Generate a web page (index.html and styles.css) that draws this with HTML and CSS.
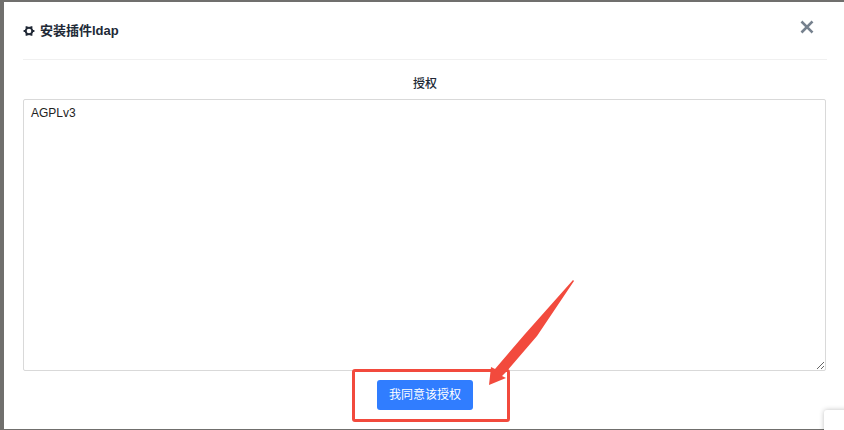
FILE: index.html
```html
<!DOCTYPE html>
<html lang="zh-CN">
<head>
  <meta charset="UTF-8">
  <meta name="viewport" content="width=device-width, initial-scale=1">
  <title>安装插件ldap</title>
  <link rel="stylesheet" href="styles.css">
</head>
<body>
  <div class="modal" role="dialog" aria-labelledby="modalTitle">
    <header class="modal-header">
      <svg class="gear" viewBox="0 0 12 12" aria-hidden="true">
        <circle cx="6" cy="6" r="3.3" fill="none" stroke="currentColor" stroke-width="2"/>
        <path d="M3.6 1.3v2M8.4 1.3v2M3.6 8.7v2M8.4 8.7v2M.6 6h2M9.4 6h2" stroke="currentColor" stroke-width="2"/>
      </svg>
      <h1 id="modalTitle">安装插件ldap</h1>
      <button class="close" type="button" aria-label="关闭">
        <svg viewBox="0 0 14 14" aria-hidden="true">
          <path d="M2.4 2.4l9.2 9.2M11.6 2.4l-9.2 9.2" stroke="currentColor" stroke-width="2.6" stroke-linecap="square"/>
        </svg>
      </button>
    </header>

    <form class="license-form">
      <label for="license">授权</label>
      <textarea id="license" readonly>AGPLv3</textarea>
      <div class="actions">
        <button class="agree" type="button">我同意该授权</button>
        <div class="highlight"></div>
        <svg class="arrow" viewBox="0 0 88 108" aria-hidden="true">
          <path d="M0 107L2 89L6 91L36 56L84 2L85 3L48 58L18 93L13 98L17 100Z" fill="#f24a3d"/>
        </svg>
      </div>
    </form>
  </div>

  <!-- Corner widget -->
  <div class="corner-widget"></div>
</body>
</html>
```

FILE: styles.css
```css
* {
  margin: 0;
  padding: 0;
  box-sizing: border-box;
}

body {
  min-height: 100vh;
  display: flex;
  padding: 2px 0 1px 4px;
  overflow: hidden;
  background: #706f6d;
  color: #212936;
  font-family: "Liberation Sans", "Noto Sans CJK SC", sans-serif;
  font-size: 13px;
}

/* Modal */
.modal {
  flex: 1;
  display: flex;
  flex-direction: column;
  padding: 0 17px 19px 19px;
  background: #fff;
}

.modal-header {
  display: flex;
  align-items: center;
  height: 58px;
  border-bottom: 1px solid #f0f0f0;
}

.gear {
  width: 12px;
  height: 12px;
  margin-right: 5px;
}

.modal-header h1 {
  font-size: 13px;
  line-height: 20px;
  font-weight: bold;
}

.close {
  width: 14px;
  height: 14px;
  margin: 0 13px 8px auto;
  border: none;
  background: none;
  color: #76818e;
  cursor: pointer;
}

.close svg {
  display: block;
}

/* License form */
.license-form {
  flex: 1;
  display: flex;
  flex-direction: column;
}

.license-form label {
  padding: 14px 0 5px;
  line-height: 20px;
  font-size: 12px;
  font-weight: 500;
  text-align: center;
}

.license-form textarea {
  flex: 1;
  margin-right: 1px;
  padding: 5px 7px;
  border: 1px solid #d9d9d9;
  border-radius: 2px;
  background: #fff;
  color: #222;
  font-family: inherit;
  font-size: 12px;
  line-height: 16px;
  outline: none;
  resize: vertical;
}

.actions {
  position: relative;
  align-self: center;
  margin-top: 9px;
}

.agree {
  display: block;
  height: 30px;
  padding: 0 12px;
  border: none;
  border-radius: 3px;
  background: #307dff;
  color: #fff;
  font-family: inherit;
  font-size: 12px;
  line-height: 30px;
  cursor: pointer;
}

/* Marker drawn over the button */
.highlight {
  position: absolute;
  inset: -11px -37px -12px -25px;
  border: 3px solid #f24a3d;
  border-radius: 3px;
  pointer-events: none;
}

.arrow {
  position: absolute;
  left: 112px;
  bottom: 24px;
  width: 88px;
  height: 108px;
  pointer-events: none;
}

/* Corner widget */
.corner-widget {
  position: fixed;
  right: -10px;
  bottom: -10px;
  width: 30px;
  height: 30px;
  border-radius: 3px;
  background: #fff;
  box-shadow: 0 0 5px rgba(0, 0, 0, 0.25);
}
```
